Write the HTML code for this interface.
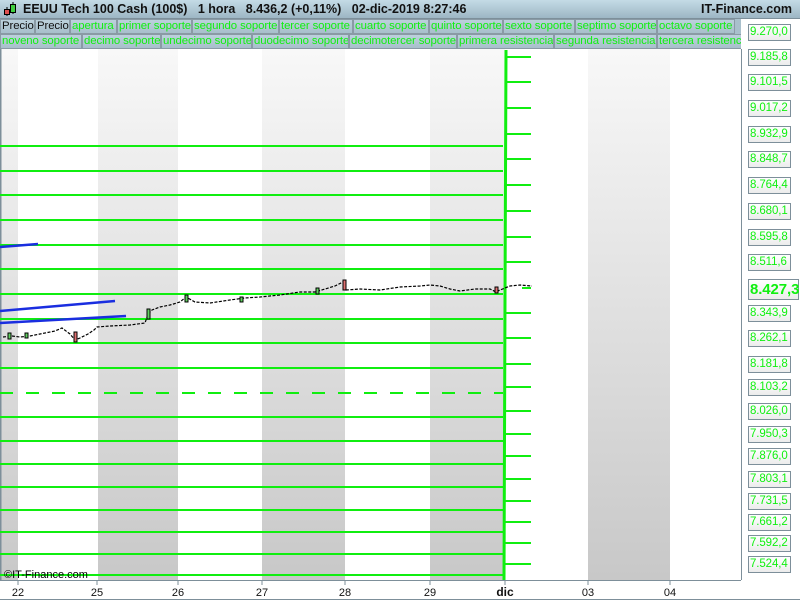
<!DOCTYPE html>
<html><head><meta charset="utf-8"><style>
*{margin:0;padding:0;box-sizing:border-box}
body{width:800px;height:600px;overflow:hidden;background:#fff;font-family:"Liberation Sans",sans-serif;position:relative}
.hdr{position:absolute;left:0;top:0;width:800px;height:19px;background:linear-gradient(#c4dbe6,#9db6c4);border-bottom:1px solid #7d8f9a;font-size:12.5px;font-weight:bold;color:#111;line-height:19px}
.tabs{position:absolute;left:0;width:741px;height:15px;background:#a9c0cc;overflow:hidden;white-space:nowrap}
.tab{position:absolute;top:0;height:15px;border:1px solid #8a9aa5;background:linear-gradient(#bcd1dc,#a8bfcb);font-size:11.4px;color:#10f010;line-height:13px;padding-left:1px;overflow:hidden;letter-spacing:-0.1px}
.tab.b{color:#111}
.lab{position:absolute;left:748px;width:43px;height:17px;border:1px solid #7d8f9a;background:linear-gradient(#fff,#ececec);font-size:11.5px;color:#10f010;line-height:15px;padding-left:1px;letter-spacing:-0.1px}
</style></head><body>
<div class="hdr">
<svg style="position:absolute;left:3px;top:2px" width="14" height="15"><line x1="4" y1="5" x2="4" y2="14" stroke="#000"/><rect x="1.5" y="7.5" width="5" height="5" fill="#e05050" stroke="#000"/><line x1="10" y1="0" x2="10" y2="12" stroke="#000"/><rect x="7.5" y="2.5" width="5" height="8" fill="#40d040" stroke="#000"/></svg>
<span style="position:absolute;left:23px">EEUU Tech 100 Cash (100$)&nbsp;&nbsp;&nbsp;1 hora&nbsp;&nbsp;&nbsp;8.436,2 (+0,11%)&nbsp;&nbsp;&nbsp;02-dic-2019 8:27:46</span>
<span style="position:absolute;right:8px">IT-Finance.com</span>
</div>
<div class="tabs" style="top:19px">
<div class="tab b" style="left:0;width:35px">Precio</div>
<div class="tab b" style="left:35px;width:35px">Precio</div>
<div class="tab" style="left:70px;width:47px">apertura</div>
<div class="tab" style="left:117px;width:75px">primer soporte</div>
<div class="tab" style="left:192px;width:87px">segundo soporte</div>
<div class="tab" style="left:279px;width:74px">tercer soporte</div>
<div class="tab" style="left:353px;width:76px">cuarto soporte</div>
<div class="tab" style="left:429px;width:74px">quinto soporte</div>
<div class="tab" style="left:503px;width:72px">sexto soporte</div>
<div class="tab" style="left:575px;width:82px">septimo soporte</div>
<div class="tab" style="left:657px;width:78px">octavo soporte</div>
</div>
<div class="tabs" style="top:34px">
<div class="tab" style="left:0;width:82px">noveno soporte</div>
<div class="tab" style="left:82px;width:79px">decimo soporte</div>
<div class="tab" style="left:161px;width:91px">undecimo soporte</div>
<div class="tab" style="left:252px;width:97px">duodecimo soporte</div>
<div class="tab" style="left:349px;width:108px">decimotercer soporte</div>
<div class="tab" style="left:457px;width:97px">primera resistencia</div>
<div class="tab" style="left:554px;width:103px">segunda resistencia</div>
<div class="tab" style="left:657px;width:90px">tercera resistencia</div>
</div>
<svg style="position:absolute;left:0;top:49px" width="800" height="551">
<defs><linearGradient id="g" x1="0" y1="0" x2="0" y2="1"><stop offset="0" stop-color="#f8f8f8"/><stop offset="1" stop-color="#c8c8c8"/></linearGradient></defs>
<g fill="url(#g)">
<rect x="0" y="0" width="18" height="531"/><rect x="98" y="0" width="80" height="531"/><rect x="262" y="0" width="83" height="531"/><rect x="430" y="0" width="75" height="531"/><rect x="588" y="0" width="82" height="531"/>
</g>
<line x1="0.5" y1="0" x2="0.5" y2="531" stroke="#7d8f9a" stroke-width="2"/>
<line x1="741.5" y1="0" x2="741.5" y2="531" stroke="#7d8f9a"/>
<line x1="0" y1="531.5" x2="741" y2="531.5" stroke="#7d8f9a"/>
<g stroke="#10ee10" stroke-width="2" shape-rendering="crispEdges" transform="translate(0,-49)">
<line x1="0" y1="146" x2="503" y2="146"/><line x1="0" y1="171" x2="503" y2="171"/><line x1="0" y1="195" x2="503" y2="195"/><line x1="0" y1="220" x2="503" y2="220"/><line x1="0" y1="245" x2="503" y2="245"/><line x1="0" y1="269" x2="503" y2="269"/><line x1="0" y1="294" x2="503" y2="294"/><line x1="0" y1="319" x2="503" y2="319"/><line x1="0" y1="343" x2="503" y2="343"/><line x1="0" y1="368" x2="503" y2="368"/>
<line x1="0" y1="393" x2="503" y2="393" stroke-dasharray="13,13" stroke-width="2"/>
<line x1="0" y1="417" x2="503" y2="417"/><line x1="0" y1="441" x2="503" y2="441"/><line x1="0" y1="464" x2="503" y2="464"/><line x1="0" y1="487" x2="503" y2="487"/><line x1="0" y1="510" x2="503" y2="510"/><line x1="0" y1="532" x2="503" y2="532"/><line x1="0" y1="554" x2="503" y2="554"/><line x1="0" y1="575" x2="503" y2="575"/>
<line x1="505" y1="57" x2="531" y2="57"/><line x1="505" y1="82" x2="531" y2="82"/><line x1="505" y1="108" x2="531" y2="108"/><line x1="505" y1="134" x2="531" y2="134"/><line x1="505" y1="159" x2="531" y2="159"/><line x1="505" y1="185" x2="531" y2="185"/><line x1="505" y1="211" x2="531" y2="211"/><line x1="505" y1="237" x2="531" y2="237"/><line x1="505" y1="262" x2="531" y2="262"/><line x1="505" y1="313" x2="531" y2="313"/><line x1="505" y1="338" x2="531" y2="338"/><line x1="505" y1="364" x2="531" y2="364"/><line x1="505" y1="387" x2="531" y2="387"/><line x1="505" y1="411" x2="531" y2="411"/><line x1="505" y1="434" x2="531" y2="434"/><line x1="505" y1="456" x2="531" y2="456"/><line x1="505" y1="479" x2="531" y2="479"/><line x1="505" y1="501" x2="531" y2="501"/><line x1="505" y1="522" x2="531" y2="522"/><line x1="505" y1="543" x2="531" y2="543"/><line x1="505" y1="564" x2="531" y2="564"/>
<line x1="522" y1="288" x2="531" y2="288" stroke-width="2"/>
</g>
<path d="M506 1 L505 251 L504 531" stroke="#10ee10" stroke-width="3" fill="none"/>
<g stroke="#1a2ee0" stroke-width="2.5" transform="translate(0,-49)">
<line x1="0" y1="247" x2="38" y2="244"/><line x1="0" y1="311" x2="115" y2="301"/><line x1="0" y1="323" x2="126" y2="316"/>
</g>
<g transform="translate(0,-49)" fill="none" stroke="#000" stroke-width="1.2" stroke-dasharray="3,1.5">
<path d="M3 337 L12 336 L20 337 L30 336 L40 334 L55 331 L62 328 L70 334 L75 340 L80 338 L88 334 L94 330 L97 327 L110 326 L130 325 L145 323 L148 314 L152 310 L160 307 L170 305 L180 302 L186 297 L195 302 L210 303 L230 300 L245 298 L260 297 L280 295 L300 292 L315 292 L325 289 L335 286 L343 282 L346 290 L360 289 L380 290 L400 287 L420 286 L430 285 L440 286 L450 289 L460 291 L475 289 L490 289 L496 292 L500 290 L510 286 L520 285 L532 286"/>
</g>
<g transform="translate(0,-49)" stroke="#000" stroke-width="1">
<rect x="343" y="280" width="3" height="10" fill="#e07070"/><rect x="74" y="332" width="3" height="10" fill="#e07070"/><rect x="147" y="309" width="3" height="10" fill="#60d060"/><rect x="185" y="295" width="3" height="7" fill="#60d060"/><rect x="8" y="333" width="3" height="6" fill="#60d060"/><rect x="25" y="333" width="3" height="5" fill="#60d060"/><rect x="240" y="297" width="3" height="5" fill="#60d060"/><rect x="316" y="288" width="3" height="6" fill="#60d060"/><rect x="495" y="287" width="3" height="6" fill="#e07070"/>
</g>
<text x="4" y="529" font-size="11" fill="#000">©IT-Finance.com</text>
<g stroke="#7d8f9a"><line x1="18" y1="531" x2="18" y2="536"/><line x1="97" y1="531" x2="97" y2="536"/><line x1="178" y1="531" x2="178" y2="536"/><line x1="262" y1="531" x2="262" y2="536"/><line x1="345" y1="531" x2="345" y2="536"/><line x1="430" y1="531" x2="430" y2="536"/><line x1="505" y1="531" x2="505" y2="536"/><line x1="588" y1="531" x2="588" y2="536"/><line x1="670" y1="531" x2="670" y2="536"/></g>
<g font-size="11" fill="#111" text-anchor="middle">
<text x="18" y="547">22</text><text x="97" y="547">25</text><text x="178" y="547">26</text><text x="262" y="547">27</text><text x="345" y="547">28</text><text x="430" y="547">29</text><text x="505" y="547" font-weight="bold" font-size="12">dic</text><text x="588" y="547">03</text><text x="670" y="547">04</text>
</g>
<line x1="0" y1="550.5" x2="800" y2="550.5" stroke="#7d8f9a"/>
</svg>
<div class="lab" style="top:24px">9.270,0</div>
<div class="lab" style="top:49px">9.185,8</div>
<div class="lab" style="top:74px">9.101,5</div>
<div class="lab" style="top:100px">9.017,2</div>
<div class="lab" style="top:126px">8.932,9</div>
<div class="lab" style="top:151px">8.848,7</div>
<div class="lab" style="top:177px">8.764,4</div>
<div class="lab" style="top:203px">8.680,1</div>
<div class="lab" style="top:229px">8.595,8</div>
<div class="lab" style="top:254px">8.511,6</div>
<div class="lab" style="top:279px;width:51px;height:21px;font-size:15px;font-weight:bold;line-height:19px">8.427,3</div>
<div class="lab" style="top:305px">8.343,9</div>
<div class="lab" style="top:330px">8.262,1</div>
<div class="lab" style="top:356px">8.181,8</div>
<div class="lab" style="top:379px">8.103,2</div>
<div class="lab" style="top:403px">8.026,0</div>
<div class="lab" style="top:426px">7.950,3</div>
<div class="lab" style="top:448px">7.876,0</div>
<div class="lab" style="top:471px">7.803,1</div>
<div class="lab" style="top:493px">7.731,5</div>
<div class="lab" style="top:514px">7.661,2</div>
<div class="lab" style="top:535px">7.592,2</div>
<div class="lab" style="top:556px">7.524,4</div>
</body></html>
